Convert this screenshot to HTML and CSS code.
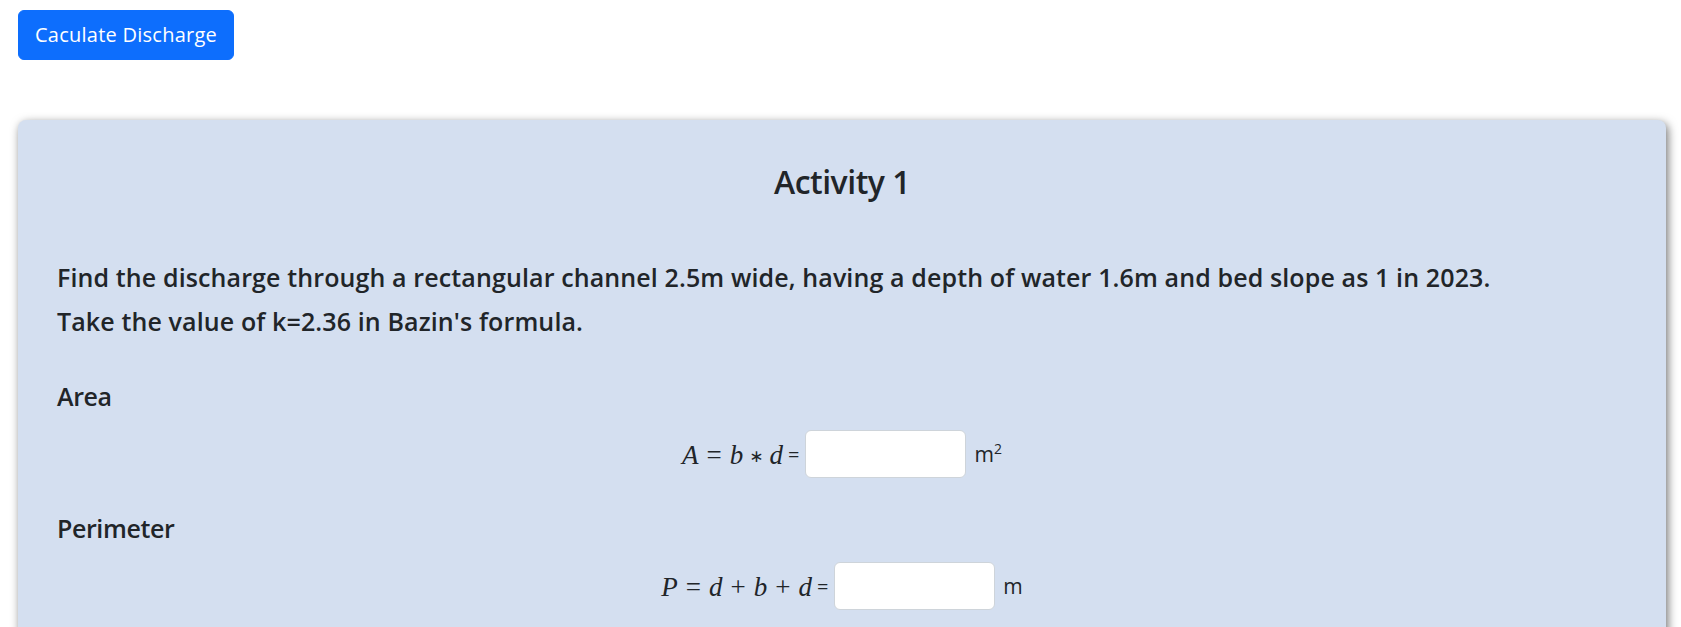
FILE: index.html
```html
<!DOCTYPE html>
<html lang="en">
<head>
<meta charset="utf-8">
<title>Activity 1</title>
<link rel="stylesheet" href="styles.css">
</head>
<body>
<div class="page">
  <button class="btn">Caculate Discharge</button>
  <section class="card">
    <h2 class="title">Activity 1</h2>
    <p class="question">Find the discharge through a rectangular channel 2.5m wide, having a depth of water 1.6m and bed slope as 1 in 2023.<br>Take the value of k=2.36 in Bazin's formula.</p>
    <h4 class="label">Area</h4>
    <div class="formula">
      <span class="math"><i>A</i><span class="rel">=</span><i>b</i><span class="bin star">∗</span><i>d</i></span>
      <span class="eq">=</span>
      <input class="field" type="text">
      <span class="unit">m<sup>2</sup></span>
    </div>
    <h4 class="label">Perimeter</h4>
    <div class="formula">
      <span class="math"><i>P</i><span class="rel">=</span><i>d</i><span class="bin">+</span><i>b</i><span class="bin">+</span><i>d</i></span>
      <span class="eq">=</span>
      <input class="field" type="text">
      <span class="unit">m</span>
    </div>
  </section>
</div>
</body>
</html>
```

FILE: styles.css
```css
html, body {
  margin: 0;
  padding: 0;
  background: #ffffff;
}

body {
  font-family: "Open Sans", "Noto Sans", "Liberation Sans", sans-serif;
  color: #212529;
  overflow: hidden;
}

.page {
  padding: 10px 15px 0 18px;
  display: flex;
  flex-direction: column;
  align-items: flex-start;
}

.btn {
  font-family: inherit;
  font-size: 20px;
  line-height: 30px;
  padding: 9px 16px;
  border: 1px solid #0d6efd;
  background: #0d6efd;
  color: #ffffff;
  border-radius: 6px;
  letter-spacing: 0.25px;
  cursor: pointer;
}

.card {
  align-self: stretch;
  margin-top: 60px;
  background: #d4dff0;
  border-radius: 8px;
  box-shadow: 2px 3px 10px rgba(0, 0, 0, 0.55);
  padding: 43px 39px 40px 39px;
  min-height: 600px;
}

.title {
  margin: 0;
  text-align: center;
  font-size: 32px;
  line-height: 38px;
  font-weight: 600;
  letter-spacing: -0.5px;
}

.question {
  margin: 54px 0 0 0;
  font-size: 25px;
  line-height: 44px;
  font-weight: 600;
  letter-spacing: 0.12px;
}

.label {
  margin: 31px 0 0 0;
  font-size: 25px;
  line-height: 44px;
  font-weight: 600;
  letter-spacing: -0.4px;
}

.formula {
  display: flex;
  justify-content: center;
  align-items: center;
  margin-top: 14px;
}

.formula + .label {
  margin-top: 28px;
}

.label + .formula {
  margin-top: 12px;
}

.math {
  font-family: "Liberation Serif", "Times New Roman", serif;
  font-size: 27px;
  line-height: 30px;
  margin-top: 2px;
  white-space: nowrap;
}

.math i {
  font-style: italic;
}

.rel {
  margin: 0 8px;
}

.bin {
  margin: 0 8px;
}

.star {
  display: inline-block;
  font-family: "DejaVu Sans", sans-serif;
  font-size: 17px;
  vertical-align: 2px;
  margin: 0 6px;
}

.eq {
  font-size: 20px;
  margin: 0 6px 0 5px;
}

.field {
  box-sizing: border-box;
  width: 161px;
  height: 48px;
  border: 1px solid #ced4da;
  border-radius: 6px;
  background: #ffffff;
  padding: 6px 12px;
  font-size: 20px;
  font-family: inherit;
}

.unit {
  font-size: 21px;
  margin-left: 8px;
}

.unit sup {
  font-size: 14px;
  line-height: 0;
  vertical-align: 8px;
}
```
